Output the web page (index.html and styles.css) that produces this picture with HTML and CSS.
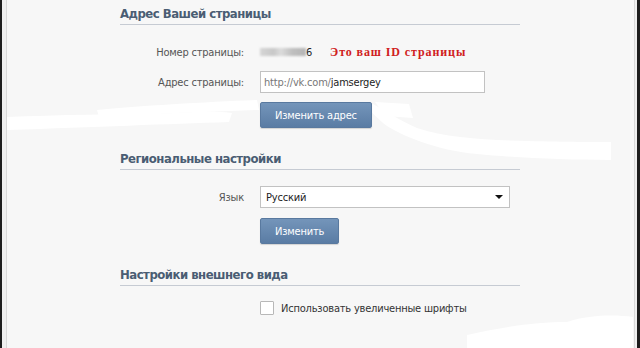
FILE: index.html
```html
<!DOCTYPE html>
<html lang="ru">
<head>
<meta charset="utf-8">
<title>Настройки</title>
<link rel="stylesheet" href="styles.css">
</head>
<body>
<div class="frame">
  <div class="page">
    <svg class="strokes" width="629" height="348" viewBox="0 0 629 348" aria-hidden="true">
      <path d="M0 117 C50 115 110 114 170 113 C190 112 205 111 225 113 L222 122 C160 124 90 127 0 130 Z" fill="#fff"/>
      <path d="M90 110 C130 106 200 102 250 100 L252 110 C200 112 140 114 92 117 Z" fill="#fff"/>
      <path d="M366 104 C380 112 392 120 410 128 C440 138 480 140 520 141 C560 142 590 142 604 142 L604 160 C560 160 510 158 470 154 C430 150 400 138 380 126 C372 120 364 112 360 106 Z" fill="#fff"/>
      <path d="M368 102 L402 104 L406 118 L378 116 Z" fill="#fff"/>
      <path d="M460 335 C500 326 530 322 560 322 C585 314 610 315 626 317 L626 348 L460 348 Z" fill="#fff"/>
    </svg>

    <section class="block">
      <h2 class="block-title">Адрес Вашей страницы</h2>
      <div class="form">
        <div class="row row-text">
          <span class="label">Номер страницы:</span>
          <span class="value"><span class="blur"></span>6<span class="note">Это ваш ID страницы</span></span>
        </div>
        <div class="row row-input">
          <span class="label">Адрес страницы:</span>
          <div class="field field-input"><span class="prefix">http://vk.com/</span>jamsergey</div>
        </div>
        <div class="row row-btn">
          <span class="label"></span>
          <div><button class="btn">Изменить адрес</button></div>
        </div>
      </div>
    </section>

    <section class="block">
      <h2 class="block-title">Региональные настройки</h2>
      <div class="form">
        <div class="row row-select">
          <span class="label">Язык</span>
          <div class="field field-select"><span>Русский</span><span class="arrow"></span></div>
        </div>
        <div class="row row-btn">
          <span class="label"></span>
          <div><button class="btn">Изменить</button></div>
        </div>
      </div>
    </section>

    <section class="block">
      <h2 class="block-title">Настройки внешнего вида</h2>
      <div class="form">
        <div class="row row-check">
          <span class="label"></span>
          <label class="check"><span class="box"></span>Использовать увеличенные шрифты</label>
        </div>
      </div>
    </section>
  </div>
</div>
</body>
</html>
```

FILE: styles.css
```css
html, body {
  margin: 0;
  padding: 0;
}
body {
  background: #1d1d1d;
  height: 348px;
  overflow: hidden;
  font-family: "DejaVu Sans", sans-serif;
  font-stretch: condensed;
  font-size: 11px;
  letter-spacing: -0.2px;
  color: #333;
}
.frame {
  margin: 0 3px 0 2px;
  height: 348px;
  background: #efefef;
  padding: 0 2px 0 4px;
  box-sizing: border-box;
}
.page {
  position: relative;
  height: 348px;
  box-sizing: border-box;
  background: #f7f7f7;
  border-left: 1px solid #d9d9d9;
  border-right: 1px solid #d9d9d9;
  padding-top: 6px;
  overflow: hidden;
}
.strokes {
  position: absolute;
  left: 0;
  top: 0;
  pointer-events: none;
}
.block {
  position: relative;
  margin-left: 113px;
  width: 400px;
}
.block + .block {
  margin-top: 23px;
}
.block-title {
  margin: 0;
  font-size: 13px;
  font-weight: bold;
  letter-spacing: -0.5px;
  line-height: 16px;
  padding-bottom: 2px;
  color: #4a5d73;
  border-bottom: 1px solid #c6cbd3;
}
.form {
  display: flex;
  flex-direction: column;
}
.row {
  display: grid;
  grid-template-columns: 124px 1fr;
  column-gap: 16px;
  align-items: center;
}
.label {
  text-align: right;
  color: #555;
  white-space: nowrap;
}
.row-text {
  margin-top: 19px;
  height: 16px;
}
.value {
  display: flex;
  align-items: center;
  color: #222;
}
.blur {
  display: inline-block;
  width: 46px;
  height: 8px;
  background: linear-gradient(90deg, #d6d6d6 0%, #c8c8c8 30%, #dcdcdc 45%, #bfbfbf 70%, #b5b5b5 100%);
  filter: blur(1px);
}
.note {
  margin-left: 18px;
  font-family: "Liberation Serif", serif;
  font-weight: bold;
  font-size: 12px;
  letter-spacing: 0.9px;
  color: #d02020;
}
.field {
  box-sizing: border-box;
  height: 22px;
  background: #fff;
  border: 1px solid #c2c2c2;
  display: flex;
  align-items: center;
  padding-left: 3px;
  color: #222;
}
.row-input {
  margin-top: 11px;
}
.field-input {
  width: 225px;
}
.prefix {
  color: #777;
}
.row-btn {
  margin-top: 9px;
}
.btn {
  box-sizing: border-box;
  height: 26px;
  padding: 0 14px;
  border: 1px solid #59799f;
  border-radius: 2px;
  background: linear-gradient(#7495ba, #5a7ca4);
  color: #fff;
  font-family: "DejaVu Sans", sans-serif;
  font-stretch: condensed;
  font-size: 11px;
  letter-spacing: -0.2px;
  box-shadow: 0 1px 1px rgba(0, 0, 0, 0.15);
}
.row-select {
  margin-top: 16px;
}
.field-select {
  width: 250px;
  justify-content: space-between;
  padding: 0 6px 0 5px;
}
.arrow {
  width: 0;
  height: 0;
  border-left: 4px solid transparent;
  border-right: 4px solid transparent;
  border-top: 4px solid #111;
}
.block:nth-of-type(2) .row-btn {
  margin-top: 10px;
}
.row-check {
  margin-top: 14px;
  height: 16px;
}
.check {
  display: flex;
  align-items: center;
  color: #333;
}
.box {
  box-sizing: border-box;
  width: 14px;
  height: 14px;
  background: #fff;
  border: 1px solid #b8b8b8;
  border-radius: 1px;
  margin-right: 7px;
}
```
